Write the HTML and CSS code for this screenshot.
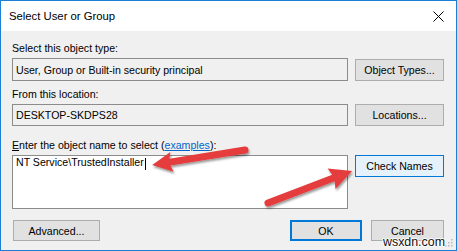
FILE: index.html
```html
<!DOCTYPE html>
<html>
<head>
<meta charset="utf-8">
<link rel="stylesheet" href="styles.css">
</head>
<body>
<div class="window">
  <div class="titlebar">
    <span class="title">Select User or Group</span>
    <svg class="close" viewBox="0 0 11 11"><path d="M0.5 0.5 L10.5 10.5 M10.5 0.5 L0.5 10.5" stroke="#000" stroke-width="1" fill="none"/></svg>
  </div>
  <div class="content">
    <div class="label">Select this object type:</div>
    <div class="row r1">
      <div class="field ro">User, Group or Built-in security principal</div>
      <button class="btn">Object Types...</button>
    </div>
    <div class="label l2">From this location:</div>
    <div class="row r2">
      <div class="field ro">DESKTOP-SKDPS28</div>
      <button class="btn">Locations...</button>
    </div>
    <div class="label l3"><u>E</u>nter the object name to select (<span class="link">examples</span>):</div>
    <div class="row r3">
      <div class="field multi"><span>NT Service\TrustedInstaller</span><span class="caret"></span></div>
      <button class="btn focus">Check Names</button>
    </div>
    <div class="footer">
      <button class="btn adv">Advanced...</button>
      <div class="spacer"></div>
      <button class="btn ok">OK</button>
      <button class="btn cancel">Cancel</button>
    </div>
  </div>
  <svg class="grip" viewBox="0 0 8 8">
    <rect x="6" y="0" width="1.5" height="1.5" fill="#b8b8b8"/>
    <rect x="3" y="3" width="1.5" height="1.5" fill="#b8b8b8"/>
    <rect x="6" y="3" width="1.5" height="1.5" fill="#b8b8b8"/>
    <rect x="0" y="6" width="1.5" height="1.5" fill="#b8b8b8"/>
    <rect x="3" y="6" width="1.5" height="1.5" fill="#b8b8b8"/>
    <rect x="6" y="6" width="1.5" height="1.5" fill="#b8b8b8"/>
  </svg>
</div>
<svg class="arrows" width="457" height="251" viewBox="0 0 457 251">
  <defs>
    <filter id="sh" x="-20%" y="-50%" width="140%" height="200%">
      <feDropShadow dx="1" dy="2" stdDeviation="1.2" flood-color="#000" flood-opacity="0.4"/>
    </filter>
  </defs>
  <g filter="url(#sh)" fill="#e53c3c">
    <path transform="translate(245,150) rotate(170.84)" d="M0,-3.5 L76,-3.5 L74,-10 L94,0 L74,10 L76,3.5 L0,3.5 A3.5,3.5 0 0 1 0,-3.5 Z"/>
    <path transform="translate(268,203) rotate(-20.85)" d="M0,-3.5 L70,-3.5 L68,-11 L90,0 L68,11 L70,3.5 L0,3.5 A3.5,3.5 0 0 1 0,-3.5 Z"/>
  </g>
</svg>
<div class="watermark">wsxdn.com</div>
</body>
</html>
```
FILE: styles.css
```css
html, body {
  margin: 0;
  padding: 0;
  background: #fff;
}
body {
  position: relative;
  width: 457px;
  height: 251px;
  overflow: hidden;
}
.window {
  position: relative;
  width: 457px;
  height: 251px;
  box-sizing: border-box;
  border: 1px solid #1c7fd6;
  background: #f0f0f0;
  font-family: "Liberation Sans", Arial, sans-serif;
  font-size: 10.6px;
  color: #000;
  display: flex;
  flex-direction: column;
}
.titlebar {
  flex: none;
  height: 30px;
  background: #fff;
  display: flex;
  align-items: center;
  justify-content: space-between;
  padding: 0 12px 0 8px;
}
.title {
  font-size: 11.3px;
}
.close {
  width: 11px;
  height: 11px;
  display: block;
}
.content {
  display: flex;
  flex-direction: column;
  padding: 11px 12px 0 11px;
}
.label {
  line-height: 13px;
  margin-bottom: 3px;
  white-space: nowrap;
}
.l2 { margin-top: 7px; }
.l3 { margin-top: 13px; }
.link {
  color: #0066cc;
  text-decoration: underline;
}
.row {
  display: flex;
  gap: 7px;
  align-items: center;
}
.field {
  width: 336px;
  box-sizing: border-box;
  border: 1px solid #8c8c8c;
  padding: 0 3px;
  display: flex;
  align-items: center;
  white-space: nowrap;
}
.ro { background: #f0f0f0; }
.r1 .field { height: 23px; }
.r2 .field { height: 22px; }
.r3 { align-items: flex-start; }
.multi {
  height: 54px;
  background: #fff;
  align-items: flex-start;
  line-height: 13px;
  padding-top: 0;
}
.caret {
  display: inline-block;
  width: 1px;
  height: 12px;
  background: #000;
  margin-top: 2px;
  margin-left: 1px;
}
.btn {
  width: 89px;
  height: 22px;
  box-sizing: border-box;
  border: 1px solid #adadad;
  background: #e1e1e1;
  font: inherit;
  color: #000;
  padding: 0;
  flex: none;
}
.focus {
  background: #e5f1fb;
  border-color: #0078d7;
}
.footer {
  display: flex;
  align-items: center;
  margin-top: 11px;
}
.adv { width: 87px; height: 21px; margin-left: 1px; }
.spacer { flex: 1; }
.ok {
  width: 72px;
  height: 21px;
  border: 2px solid #0078d7;
  margin-right: 9px;
}
.cancel { width: 73px; height: 21px; }
.grip {
  position: absolute;
  right: 3px;
  bottom: 3px;
  width: 8px;
  height: 8px;
}
.arrows {
  position: absolute;
  left: 0;
  top: 0;
  pointer-events: none;
}
.watermark {
  position: absolute;
  left: 383px;
  top: 235px;
  font-family: "Liberation Sans", Arial, sans-serif;
  font-size: 12.4px;
  line-height: 14px;
  color: #111;
  text-shadow: 1px 0 0 #fff, -1px 0 0 #fff, 0 1px 0 #fff, 0 -1px 0 #fff;
}
```
